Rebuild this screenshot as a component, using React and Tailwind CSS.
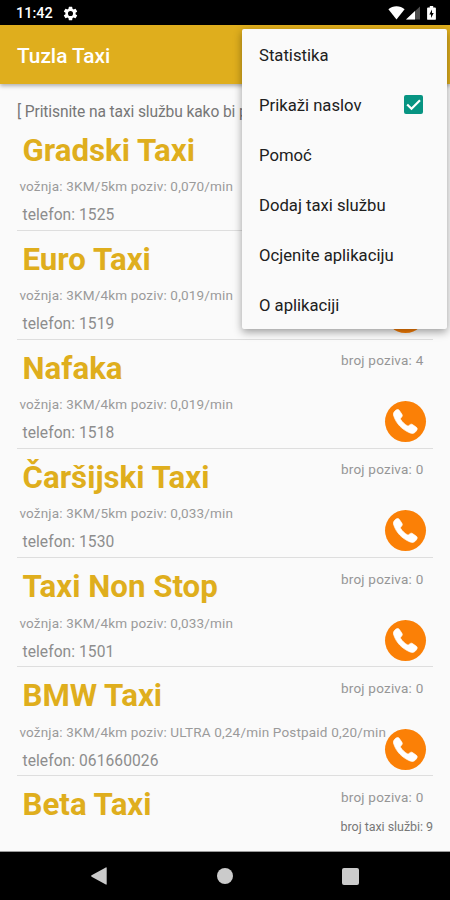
const SERVICES = [
  { name: 'Gradski Taxi', price: 'vožnja: 3KM/5km poziv: 0,070/min', phone: '1525', calls: 0 },
  { name: 'Euro Taxi', price: 'vožnja: 3KM/4km poziv: 0,019/min', phone: '1519', calls: 0 },
  { name: 'Nafaka', price: 'vožnja: 3KM/4km poziv: 0,019/min', phone: '1518', calls: 4 },
  { name: 'Čaršijski Taxi', price: 'vožnja: 3KM/5km poziv: 0,033/min', phone: '1530', calls: 0 },
  { name: 'Taxi Non Stop', price: 'vožnja: 3KM/4km poziv: 0,033/min', phone: '1501', calls: 0 },
  { name: 'BMW Taxi', price: 'vožnja: 3KM/4km poziv: ULTRA 0,24/min Postpaid 0,20/min', phone: '061660026', calls: 0 },
  { name: 'Beta Taxi', calls: 0 },
];

const MENU_ITEMS = [
  { label: 'Statistika' },
  { label: 'Prikaži naslov', checked: true },
  { label: 'Pomoć' },
  { label: 'Dodaj taxi službu' },
  { label: 'Ocjenite aplikaciju' },
  { label: 'O aplikaciji' },
];

function StatusBar() {
  return (
    <div className="flex h-[25px] shrink-0 items-center bg-black pl-4 pr-[14px] pt-px text-white">
      <span className="w-9 pt-[3px] text-[14.5px] font-medium leading-none">11:42</span>
      <svg viewBox="0 0 24 24" className="ml-[10px] size-[17px]" fill="currentColor">
        <path d="M19.14 12.94c.04-.3.06-.61.06-.94 0-.32-.02-.64-.07-.94l2.03-1.58a.49.49 0 0 0 .12-.61l-1.92-3.32a.49.49 0 0 0-.59-.22l-2.39.96a7 7 0 0 0-1.62-.94l-.36-2.54a.48.48 0 0 0-.48-.41h-3.84a.47.47 0 0 0-.47.41l-.36 2.54c-.59.24-1.13.57-1.62.94l-2.39-.96a.48.48 0 0 0-.59.22L2.74 8.87a.47.47 0 0 0 .12.61l2.03 1.58a6 6 0 0 0-.02 1.88l-2.03 1.58a.49.49 0 0 0-.12.61l1.92 3.32c.12.22.37.29.59.22l2.39-.96c.5.38 1.03.7 1.62.94l.36 2.54c.05.24.24.41.48.41h3.84c.24 0 .44-.17.47-.41l.36-2.54a7 7 0 0 0 1.62-.94l2.39.96c.22.08.47 0 .59-.22l1.92-3.32a.47.47 0 0 0-.12-.61zM12 15.6a3.6 3.6 0 1 1 0-7.2 3.6 3.6 0 0 1 0 7.2z" />
      </svg>
      <svg viewBox="0 0 17 14" className="ml-auto h-[14px] w-[17px]" fill="currentColor">
        <path d="M.4 3.2C2.6 1.3 5.4.3 8.5.3s5.9 1 8.1 2.9L8.5 13.6z" />
      </svg>
      <svg viewBox="0 0 14 14" className="ml-[1px] h-[14px] w-[14px]" fill="currentColor">
        <path d="M0 13.5L14 .5v13z" opacity=".3" />
        <path d="M0 13.5L9 5.1v8.4z" />
      </svg>
      <svg viewBox="0 0 9 14" className="ml-[7px] h-[14px] w-[9px]">
        <path d="M2.8 0h3.4v1.4H8c.5 0 .9.4.9.9v10.6c0 .5-.4.9-.9.9H1c-.5 0-.9-.4-.9-.9V2.3c0-.5.4-.9.9-.9h1.800z" fill="#fff" />
        <path d="M5 3.5L2.3 8.4H4v3.5L6.700 7H5z" fill="#000" />
      </svg>
    </div>
  );
}

function CallButton() {
  return (
    <button className="flex size-[41px] items-center justify-center rounded-full bg-[#fb8006]">
      <svg viewBox="0 0 25 25" className="size-[25px]" fill="#fff" stroke="#fff" strokeWidth=".7">
        <path d="M1 3.2C1.9 1.8 3.4.4 4.9.5c1 .1 1.5 1 2.3 2.200l1.700 2.600c.6 1 .5 1.800-.2 2.600l-1 1.200c-.4.500-.3 1 .1 1.600 1.600 2.400 3.800 4.500 6.300 6 .7.400 1.200.4 1.700 0l1.200-1c.8-.6 1.600-.7 2.500-.1l3.500 2.400c1.100.8 1.500 1.600 1 2.700-.7 1.600-2 2.900-3.500 3.500-1 .4-2.200.2-3.500-.3C8.900 20.600 3.300 14.600.8 7.100.3 5.600.3 4.300 1 3.200z" />
      </svg>
    </button>
  );
}

function ServiceRow({ service }) {
  return (
    <div className="flex h-[109.15px] shrink-0 border-b-[1.5px] border-[#dedede]">
      <div className="min-w-0 flex-1 whitespace-nowrap">
        <h2 className="pl-[5.5px] pt-[10px] text-[31.25px] font-bold leading-[37px] text-[#dfae1d]">{service.name}</h2>
        {service.price && (
          <p className="mt-[9.5px] pl-[2.4px] text-[13.54px] leading-4 tracking-[0.17px] text-[#9a9a9a]">{service.price}</p>
        )}
        {service.phone && (
          <p className="mt-[12px] pl-[5.5px] text-[15.6px] leading-[19px] tracking-[0.06px] text-[#8d8d8d]">telefon: {service.phone}</p>
        )}
      </div>
      <div className="flex w-[92px] shrink-0 flex-col">
        <span className="mt-[12.5px] whitespace-nowrap text-[13.54px] leading-4 tracking-[0.2px] text-[#969696]">
          broj poziva: {service.calls}
        </span>
        <div className="ml-[43.7px] mt-[33px]">
          <CallButton />
        </div>
      </div>
    </div>
  );
}

function OptionsMenu() {
  return (
    <div className="absolute left-[242px] top-[29px] h-[300px] w-[205px] rounded-[2px] bg-[#fafafa] shadow-[0_3px_9px_rgba(0,0,0,0.38)]">
      {MENU_ITEMS.map((item) => (
        <div key={item.label} className="flex h-[50px] items-center pl-[17px] pr-6">
          <span className="pt-[4px] text-[16.67px] leading-5 text-[#202020]">{item.label}</span>
          {item.checked && (
            <span className="ml-auto flex size-[19px] items-center justify-center rounded-[2px] bg-[#079482]">
              <svg viewBox="0 0 19 19" className="size-[19px]" fill="none" stroke="#fff" strokeWidth="2.2">
                <path d="M3.2 9.5l4.3 4.3 8.5-8.6" />
              </svg>
            </span>
          )}
        </div>
      ))}
    </div>
  );
}

function NavBar() {
  return (
    <div className="flex h-[48px] shrink-0 items-center bg-black pl-[91px] text-[#cbcbcb]">
      <svg viewBox="0 0 16 18" className="h-[18px] w-[16px]" fill="currentColor">
        <path d="M.6 8.3L14.8.4c.5-.3.9 0 .9.5v16.200c0 .5-.4.800-.9.500L.6 9.700c-.6-.4-.6-1 0-1.400z" />
      </svg>
      <span className="ml-[110px] size-4 rounded-full bg-current" />
      <span className="ml-[109px] size-[17px] rounded-[2px] bg-current" />
    </div>
  );
}

export default function App() {
  return (
    <div className="relative flex h-[900px] w-[450px] flex-col overflow-hidden bg-[#fafafa] font-['Roboto',sans-serif]">
      <StatusBar />
      <header className="z-0 flex h-[59px] shrink-0 items-center bg-[#dfae1d] pl-[17px] pt-[4px] shadow-[0_2px_4px_rgba(0,0,0,0.3)]">
        <h1 className="text-[20.8px] font-medium text-white">Tuzla Taxi</h1>
      </header>
      <main className="flex min-h-0 flex-1 flex-col px-[17px]">
        <p className="mt-[17.5px] h-5 shrink-0 overflow-hidden whitespace-nowrap text-[15.6px] leading-5 tracking-[-0.12px] text-[#777]">
          [ Pritisnite na taxi službu kako bi pozvali ]
        </p>
        <div className="flex min-h-0 flex-1 flex-col overflow-hidden">
          {SERVICES.map((service) => (
            <ServiceRow key={service.name} service={service} />
          ))}
        </div>
        <footer className="h-[33px] shrink-0 text-right text-[12.5px] leading-[18px] tracking-[-0.05px] text-[#777]">broj taxi službi: 9</footer>
      </main>
      <div className="h-px shrink-0 bg-[#9a9a9a]" />
      <NavBar />
      <OptionsMenu />
    </div>
  );
}
